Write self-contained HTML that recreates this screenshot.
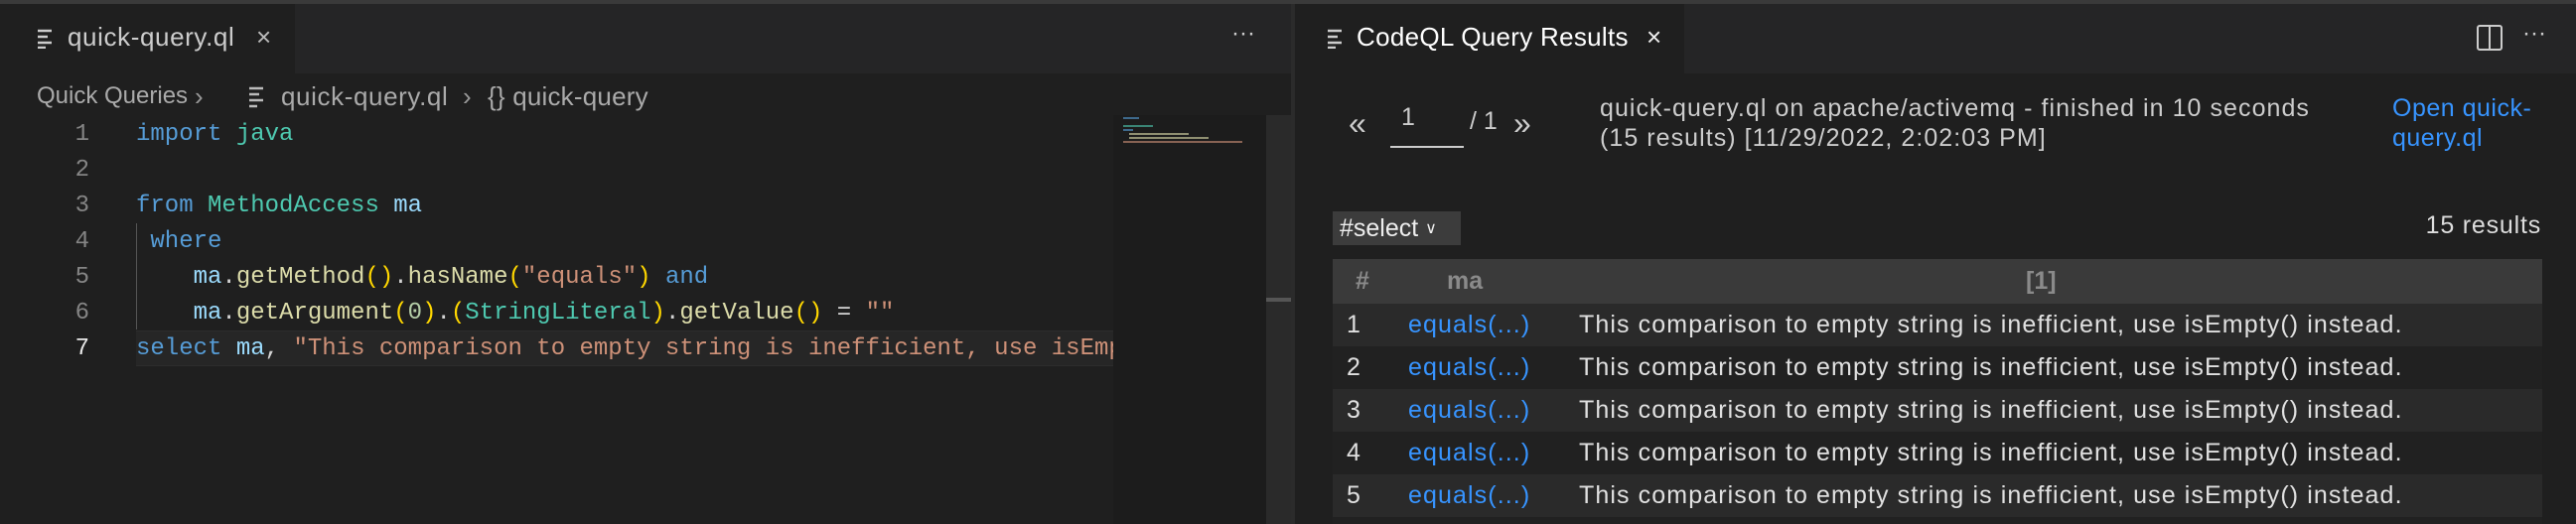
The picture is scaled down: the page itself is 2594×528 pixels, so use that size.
<!DOCTYPE html>
<html><head><meta charset="utf-8"><style>
*{margin:0;padding:0;box-sizing:border-box}
body{width:2594px;height:528px;background:#1f1f1f;overflow:hidden;position:relative;font-family:"Liberation Sans",sans-serif;color:#ccc}
.abs{position:absolute;white-space:nowrap}
.topline{left:0;top:0;width:2594px;height:4px;background:#3a3a3a}
.tabbar{top:4px;height:70px;background:#252526}
.tab{top:4px;height:70px;background:#1f1f1f}
.code{font-family:"Liberation Mono",monospace;font-size:24px;white-space:pre;line-height:36px}
.ln{left:20px;width:70px;text-align:right;font-family:"Liberation Mono",monospace;font-size:24px;line-height:36px;color:#858585;white-space:normal}
.k{color:#569cd6}.t{color:#4ec9b0}.v{color:#9cdcfe}.f{color:#dcdcaa}.s{color:#ce9178}.p{color:#ffd700}.n{color:#b5cea8}.w{color:#d4d4d4}
.ui{font-size:26px;letter-spacing:0.6px}
.row{left:1342px;width:1218px;height:43px;font-size:25px;letter-spacing:1.1px;line-height:43px;color:#e0e0e0}
.row span{position:absolute}
.lnk{color:#3794ff}
</style></head><body>
<div class="abs topline"></div>
<!-- left pane -->
<div class="abs tabbar" style="left:0;width:1300px"></div>
<div class="abs tab" style="left:0;width:297px"></div>
<svg class="abs" style="left:38px;top:29px" width="18" height="20"><g stroke="#ccc" stroke-width="2.5"><line x1="0" y1="2" x2="14" y2="2"/><line x1="0" y1="8" x2="10" y2="8"/><line x1="0" y1="14" x2="14" y2="14"/><line x1="0" y1="19" x2="8" y2="19"/></g></svg>
<div class="abs ui" style="left:68px;top:22px;color:#ccc">quick-query.ql</div>
<div class="abs" style="left:258px;top:22px;font-size:26px;color:#bbb">×</div>
<div class="abs" style="left:1240px;top:20px;font-size:24px;color:#ccc">···</div>
<div class="abs" style="left:37px;top:83px;font-size:24px;color:#aaa">Quick Queries</div>
<div class="abs ui" style="left:196px;top:82px;color:#999">›</div>
<svg class="abs" style="left:251px;top:87px" width="16" height="22"><g stroke="#bbb" stroke-width="2.5"><line x1="0" y1="2" x2="14" y2="2"/><line x1="0" y1="8" x2="10" y2="8"/><line x1="0" y1="14" x2="14" y2="14"/><line x1="0" y1="20" x2="8" y2="20"/></g></svg>
<div class="abs ui" style="left:283px;top:82px;color:#aaa">quick-query.ql</div>
<div class="abs ui" style="left:466px;top:82px;color:#999">›</div>
<div class="abs" style="left:491px;top:82px;font-size:26px;letter-spacing:0.2px;color:#aaa">{} quick-query</div>
<div class="abs" style="left:137px;top:333px;width:984px;height:36px;background:#262626;border-top:1px solid #2c2c2c;border-bottom:1px solid #2c2c2c"></div>
<div class="abs" style="left:137px;top:225px;width:1px;height:107px;background:#555"></div>
<div class="abs ln" style="top:118px">1<br>2<br>3<br>4<br>5<br>6<br><span style="color:#e8e8e8">7</span></div>
<div class="abs code" style="left:137px;top:118px;width:984px;overflow:hidden"><span class="k">import</span> <span class="t">java</span>

<span class="k">from</span> <span class="t">MethodAccess</span> <span class="v">ma</span>
 <span class="k">where</span>
    <span class="v">ma</span><span class="w">.</span><span class="f">getMethod</span><span class="p">()</span><span class="w">.</span><span class="f">hasName</span><span class="p">(</span><span class="s">"equals"</span><span class="p">)</span> <span class="k">and</span>
    <span class="v">ma</span><span class="w">.</span><span class="f">getArgument</span><span class="p">(</span><span class="n">0</span><span class="p">)</span><span class="w">.</span><span class="p">(</span><span class="t">StringLiteral</span><span class="p">)</span><span class="w">.</span><span class="f">getValue</span><span class="p">()</span> <span class="w">=</span> <span class="s">""</span>
<span class="k">select</span> <span class="v">ma</span><span class="w">,</span> <span class="s">"This comparison to empty string is inefficient, use isEmpty() instead."</span></div>
<div class="abs" style="left:1121px;top:116px;width:154px;height:412px;background:#1c1c1c"></div>
<div class="abs" style="left:1131px;top:118px;width:120px;height:30px;opacity:.6">
<div style="height:2px;width:16px;background:#569cd6;margin-top:0"></div>
<div style="height:2px;width:30px;background:#4ec9b0;margin-top:6px"></div>
<div style="height:2px;width:10px;background:#569cd6;margin-top:2px"></div>
<div style="height:2px;width:60px;background:#dcdcaa;margin-top:2px;margin-left:6px"></div>
<div style="height:2px;width:80px;background:#dcdcaa;margin-top:2px;margin-left:6px"></div>
<div style="height:2px;width:120px;background:#ce9178;margin-top:2px"></div>
</div>
<div class="abs" style="left:1275px;top:116px;width:25px;height:412px;background:#2a2a2a"></div>
<div class="abs" style="left:1275px;top:300px;width:25px;height:4px;background:#555"></div>
<div class="abs" style="left:1300px;top:4px;width:4px;height:524px;background:#2b2b2b"></div>
<!-- right pane -->
<div class="abs tabbar" style="left:1304px;width:1290px"></div>
<div class="abs tab" style="left:1304px;width:392px"></div>
<svg class="abs" style="left:1337px;top:29px" width="18" height="20"><g stroke="#ccc" stroke-width="2.5"><line x1="0" y1="2" x2="14" y2="2"/><line x1="0" y1="8" x2="10" y2="8"/><line x1="0" y1="14" x2="14" y2="14"/><line x1="0" y1="19" x2="8" y2="19"/></g></svg>
<div class="abs" style="left:1366px;top:22px;font-size:26px;letter-spacing:0.3px;color:#fff">CodeQL Query Results</div>
<div class="abs" style="left:1658px;top:22px;font-size:26px;color:#eee">×</div>
<svg class="abs" style="left:2494px;top:25px" width="26" height="26"><rect x="1" y="1" width="24" height="24" rx="2" fill="none" stroke="#ccc" stroke-width="2"/><line x1="13" y1="1" x2="13" y2="25" stroke="#ccc" stroke-width="2"/></svg>
<div class="abs" style="left:2540px;top:20px;font-size:24px;color:#ccc">···</div>
<div class="abs" style="left:1358px;top:106px;font-size:32px;color:#ccc">«</div>
<div class="abs" style="left:1411px;top:104px;font-size:25px;color:#ccc">1</div>
<div class="abs" style="left:1400px;top:147px;width:74px;height:2px;background:#ccc"></div>
<div class="abs" style="left:1480px;top:108px;font-size:25px;color:#ccc">/ 1</div>
<div class="abs" style="left:1524px;top:106px;font-size:32px;color:#ccc">»</div>
<div class="abs" style="left:1611px;top:94px;font-size:25px;letter-spacing:1.05px;line-height:30px;color:#ccc">quick-query.ql on apache/activemq - finished in 10 seconds<br>(15 results) [11/29/2022, 2:02:03 PM]</div>
<div class="abs lnk" style="left:2409px;top:94px;font-size:25px;letter-spacing:0.5px;line-height:30px">Open quick-<br>query.ql</div>
<div class="abs" style="left:1342px;top:213px;width:129px;height:34px;background:#3c3c3c;font-size:25px;line-height:34px;color:#eee;padding-left:7px">#select <span style="font-size:16px;position:relative;top:-3px">∨</span></div>
<div class="abs" style="left:2400px;top:213px;width:159px;text-align:right;font-size:25px;letter-spacing:0.8px;color:#ddd">15 results</div>
<div class="abs row" style="top:261px;height:45px;background:#3a3a3a;color:#8a8a8a;font-weight:bold;line-height:45px;letter-spacing:0"><span style="left:23px">#</span><span style="left:115px">ma</span><span style="left:698px">[1]</span></div>
<div class="abs row" style="top:306px;background:#2a2a2a"><span style="left:14px">1</span><span class="lnk" style="left:76px">equals(...)</span><span style="left:248px">This comparison to empty string is inefficient, use isEmpty() instead.</span></div>
<div class="abs row" style="top:349px;background:#212121"><span style="left:14px">2</span><span class="lnk" style="left:76px">equals(...)</span><span style="left:248px">This comparison to empty string is inefficient, use isEmpty() instead.</span></div>
<div class="abs row" style="top:392px;background:#2a2a2a"><span style="left:14px">3</span><span class="lnk" style="left:76px">equals(...)</span><span style="left:248px">This comparison to empty string is inefficient, use isEmpty() instead.</span></div>
<div class="abs row" style="top:435px;background:#212121"><span style="left:14px">4</span><span class="lnk" style="left:76px">equals(...)</span><span style="left:248px">This comparison to empty string is inefficient, use isEmpty() instead.</span></div>
<div class="abs row" style="top:478px;background:#2a2a2a"><span style="left:14px">5</span><span class="lnk" style="left:76px">equals(...)</span><span style="left:248px">This comparison to empty string is inefficient, use isEmpty() instead.</span></div>
<div class="abs" style="left:1342px;top:521px;width:1218px;height:7px;background:#212121"></div>
</body></html>
